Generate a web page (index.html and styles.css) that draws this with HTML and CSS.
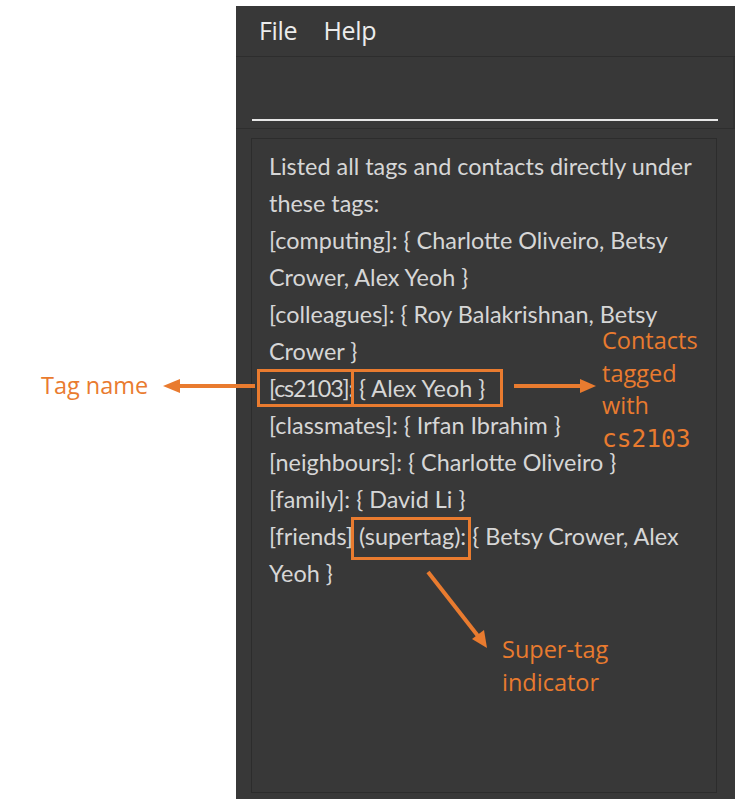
FILE: index.html
```html
<!DOCTYPE html>
<html>
<head>
<meta charset="utf-8">
<link rel="stylesheet" href="styles.css">
</head>
<body>
<div class="stage">
  <div class="window">
    <div class="menubar">
      <span class="menu-item">File</span>
      <span class="menu-item">Help</span>
    </div>
    <div class="command">
      <div class="command-line"></div>
    </div>
    <div class="result-area">
      <div class="result-box">
        <div class="line">Listed all tags and contacts directly under</div>
        <div class="line">these tags:</div>
        <div class="line">[computing]: { Charlotte Oliveiro, Betsy</div>
        <div class="line">Crower, Alex Yeoh }</div>
        <div class="line">[colleagues]: { Roy Balakrishnan, Betsy</div>
        <div class="line">Crower }</div>
        <div class="line"><span class="tight">[cs2103]:</span> { Alex Yeoh }</div>
        <div class="line">[classmates]: { Irfan Ibrahim }</div>
        <div class="line">[neighbours]: { Charlotte Oliveiro }</div>
        <div class="line">[family]: { David Li }</div>
        <div class="line">[friends] (supertag): { Betsy Crower, Alex</div>
        <div class="line">Yeoh }</div>
      </div>
    </div>
  </div>

  <div class="note note-tag">Tag name</div>
  <div class="note note-contacts">Contacts<br>tagged<br>with<br><span class="mono">cs2103</span></div>
  <div class="note note-super">Super-tag<br>indicator</div>

  <div class="frame frame-tag"></div>
  <div class="frame frame-contacts"></div>
  <div class="frame frame-super"></div>

  <svg class="arrows" width="756" height="806" viewBox="0 0 756 806">
    <g stroke="#e97b2f" stroke-width="4" fill="none">
      <line x1="255" y1="386" x2="178" y2="386"/>
      <line x1="514" y1="386" x2="582" y2="386"/>
      <line x1="428" y1="572" x2="478" y2="636"/>
    </g>
    <g fill="#e97b2f">
      <polygon points="163,386 180,379 180,393"/>
      <polygon points="596,386 580,379 580,393"/>
      <polygon points="487,648 472,639 484,630"/>
    </g>
  </svg>
</div>
</body>
</html>
```
FILE: styles.css
```css
html, body {
  margin: 0;
  padding: 0;
  background: #ffffff;
}
.stage {
  position: relative;
  width: 756px;
  height: 806px;
  padding: 6px 0 0 236px;
  box-sizing: border-box;
}
.window {
  width: 499px;
  height: 793px;
  background: #383838;
  display: flex;
  flex-direction: column;
  font-family: "Open Sans", "Noto Sans", sans-serif;
}
.menubar {
  height: 51px;
  border-bottom: 1px solid #2d2d2d;
  display: flex;
  align-items: center;
  gap: 26px;
  padding-left: 23px;
  padding-bottom: 2px;
  box-sizing: border-box;
}
.menu-item {
  color: #ececec;
  font-size: 25px;
  letter-spacing: -0.3px;
}
.command {
  height: 72px;
  border-bottom: 1px solid #2e2e2e;
  border-right: 2px solid #323232;
  display: flex;
  align-items: flex-end;
  padding: 0 15px 7px 16px;
  box-sizing: border-box;
}
.command-line {
  flex: 1;
  height: 2px;
  background: #e6e6e6;
}
.result-area {
  flex: 1;
  padding: 9px 18px 6px 15px;
  display: flex;
}
.result-box {
  flex: 1;
  border: 1px solid #2c2c2c;
  padding: 9px 0 0 17px;
  color: #d6d6d6;
  font-family: "Lato", "Open Sans", sans-serif;
  font-size: 23.4px;
  line-height: 37px;
}
.line {
  white-space: nowrap;
  width: fit-content;
}
.tight {
  letter-spacing: -1.2px;
}
.note {
  position: absolute;
  color: #e97b2f;
  font-family: "Open Sans", "Noto Sans", sans-serif;
  font-size: 23.5px;
  line-height: 33px;
}
.note-tag {
  left: 41px;
  top: 369px;
}
.note-contacts {
  left: 602px;
  top: 324px;
  line-height: 32.5px;
}
.note-super {
  left: 502px;
  top: 633px;
}
.mono {
  font-family: "DejaVu Sans Mono", "Liberation Mono", monospace;
  font-size: 24.5px;
}
.frame {
  position: absolute;
  border: 3px solid #e97b2f;
  box-sizing: border-box;
}
.frame-tag {
  left: 257px;
  top: 369px;
  width: 97px;
  height: 38px;
}
.frame-contacts {
  left: 351px;
  top: 369px;
  width: 152px;
  height: 38px;
}
.frame-super {
  left: 351px;
  top: 517px;
  width: 120px;
  height: 43px;
}
.arrows {
  position: absolute;
  left: 0;
  top: 0;
}
```
